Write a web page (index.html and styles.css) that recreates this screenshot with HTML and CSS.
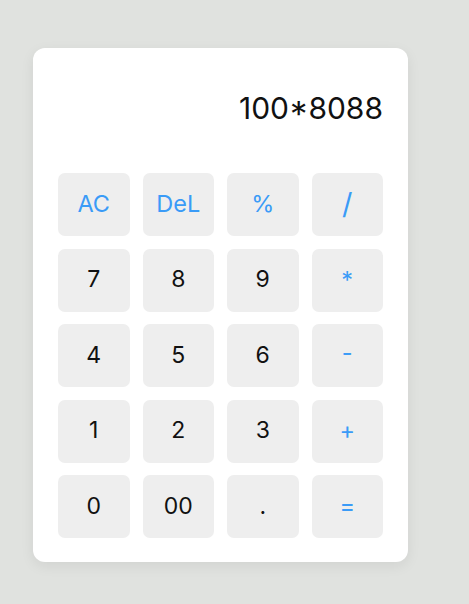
FILE: index.html
```html
<!DOCTYPE html>
<html>
<head>
<meta charset="utf-8">
<link rel="stylesheet" href="styles.css">
</head>
<body>
<div class="calc">
  <div class="display"><span class="value">100*8088</span></div>
  <div class="keys">
    <button class="key op">AC</button>
    <button class="key op">DeL</button>
    <button class="key op">%</button>
    <button class="key op slash">/</button>
    <button class="key">7</button>
    <button class="key">8</button>
    <button class="key">9</button>
    <button class="key op">*</button>
    <button class="key">4</button>
    <button class="key">5</button>
    <button class="key">6</button>
    <button class="key op minus">-</button>
    <button class="key">1</button>
    <button class="key">2</button>
    <button class="key">3</button>
    <button class="key op">+</button>
    <button class="key">0</button>
    <button class="key">00</button>
    <button class="key">.</button>
    <button class="key op">=</button>
  </div>
</div>
</body>
</html>
```
FILE: styles.css
```css
html, body {
  margin: 0;
  height: 100%;
}
body {
  background: #e0e2df;
  padding: 48px 0 0 33px;
  box-sizing: border-box;
  font-family: Inter, "Open Sans", sans-serif;
}
.calc {
  width: 375px;
  height: 514px;
  box-sizing: border-box;
  background: #ffffff;
  border-radius: 12px;
  padding: 25px 25px 24px 25px;
  box-shadow: 0 4px 14px rgba(0, 0, 0, 0.07);
  display: flex;
  flex-direction: column;
  gap: 13px;
}
.display {
  height: 87px;
  box-sizing: border-box;
  padding-top: 15px;
  text-align: right;
}
.value {
  font-size: 30px;
  line-height: 40px;
  color: #111;
  font-weight: 400;
}
.keys {
  display: grid;
  grid-template-columns: repeat(4, 1fr);
  grid-auto-rows: 63px;
  column-gap: 13px;
  row-gap: 12.5px;
}
.key {
  border: none;
  background: #eeeeee;
  border-radius: 7px;
  font-family: inherit;
  font-size: 23px;
  font-weight: 400;
  color: #111;
  padding: 0 0 2px 0;
  display: flex;
  align-items: center;
  justify-content: center;
}
.key.op {
  color: #3a9bf7;
  font-size: 23.5px;
}
.key.slash {
  font-size: 29px;
}
.key.minus {
  padding-bottom: 6px;
}
```
